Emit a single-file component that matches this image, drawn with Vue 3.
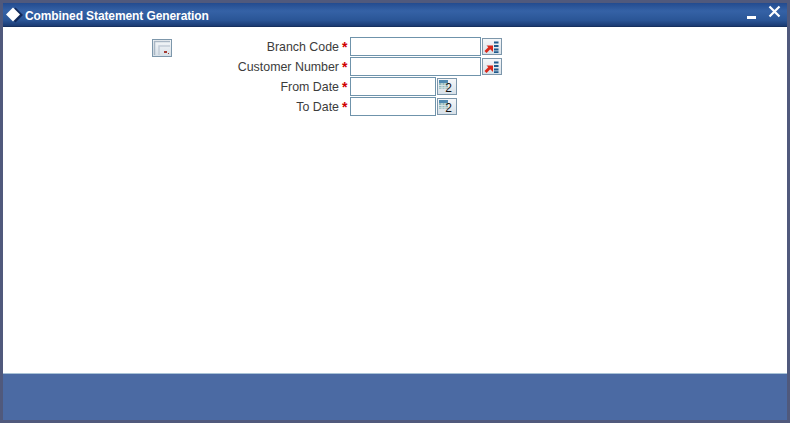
<template>
  <div class="window">
    <header class="titlebar">
      <svg class="logo" width="18" height="18" viewBox="0 0 18 18">
        <path d="M9.5 1.5 L17 9 L9.5 16.5 L2 9 Z" fill="#12295a" />
        <path d="M7 1.5 L14 8.5 L7 15.5 L0 8.5 Z" fill="#fff" />
      </svg>
      <span class="title">Combined Statement Generation</span>
      <div class="controls">
        <span class="min"></span>
        <svg width="13" height="13" viewBox="0 0 13 13">
          <path d="M1.5 1.5 L11.5 11.5 M11.5 1.5 L1.5 11.5" stroke="#fff" stroke-width="2.2" />
        </svg>
      </div>
    </header>

    <main class="body">
      <button class="icon-btn side-btn" type="button">
        <svg width="18" height="16" viewBox="0 0 18 16">
          <path d="M1.5 15 V1.5 H17" fill="none" stroke="#a9b6c4" stroke-width="1.5" />
          <path d="M6 15 V6 H17" fill="none" stroke="#c3cdd8" stroke-width="1.5" />
          <rect x="11" y="11" width="3" height="2" fill="#a33a32" />
          <rect x="15" y="13" width="1" height="1" fill="#a33a32" />
        </svg>
      </button>

      <div class="form">
        <div v-for="f in fields" :key="f.label" class="row">
          <label class="label">{{ f.label }}</label>
          <span class="star">*</span>
          <input class="input" :class="f.type" type="text" />
          <button class="icon-btn field-btn" type="button">
            <svg v-if="f.type === 'lov'" width="18" height="15" viewBox="0 0 18 15">
              <path d="M2.5 13 L7 8.5" stroke="#d8281c" stroke-width="2.8" />
              <path d="M3.5 6.5 H10 V13 Z" fill="#d8281c" />
              <path d="M11 3.5 H15.5 M11 7 H15.5 M11 10.5 H15.5 M11 13.2 H15.5" stroke="#1f5a8c" stroke-width="1.8" />
            </svg>
            <span v-else class="cal">
              <svg width="18" height="15" viewBox="0 0 18 15">
                <rect x="1" y="1" width="9" height="9" fill="#8fb8bc" />
                <rect x="1" y="1" width="9" height="3" fill="#4f8ab0" />
                <path d="M1 6.5 H10 M1 8.8 H10 M4 4 V10 M7 4 V10" stroke="#d6e4e4" stroke-width="1" />
              </svg>
              <span class="cal-num">2</span>
            </span>
          </button>
        </div>
      </div>
    </main>

    <footer class="footer"></footer>
  </div>
</template>

<script setup>
const fields = [
  { label: 'Branch Code', type: 'lov' },
  { label: 'Customer Number', type: 'lov' },
  { label: 'From Date', type: 'date' },
  { label: 'To Date', type: 'date' }
]
</script>

<style>
html, body {
  margin: 0;
  background: #50597c;
}
</style>

<style scoped>
.window {
  box-sizing: border-box;
  width: 790px;
  height: 423px;
  padding: 3px;
  display: flex;
  flex-direction: column;
  background: #50597c;
  font-family: "Liberation Sans", Arial, sans-serif;
}

.titlebar {
  height: 24px;
  flex-shrink: 0;
  display: flex;
  align-items: center;
  padding: 0 6px 0 3px;
  box-sizing: border-box;
  background: linear-gradient(#234b8f 0%, #3562a6 35%, #2a5596 75%, #1b3a72 100%);
  border-bottom: 1px solid #16305f;
}

.logo {
  margin-right: 1px;
}

.title {
  color: #fff;
  font-size: 12px;
  font-weight: 700;
  letter-spacing: -0.1px;
  padding-top: 2px;
}

.controls {
  margin-left: auto;
  display: flex;
  align-items: flex-start;
  gap: 12px;
  height: 100%;
  padding-top: 2px;
  box-sizing: border-box;
}

.min {
  width: 9px;
  height: 3px;
  background: #fff;
  margin-top: 11px;
}

.body {
  height: 347px;
  flex-shrink: 0;
  box-sizing: border-box;
  background: #fff;
  border-bottom: 1px solid #a9c2d6;
  display: flex;
  align-items: flex-start;
  padding: 10px 0 0 149px;
}

.side-btn {
  margin-top: 2px;
}

.form {
  margin-left: 37px;
  display: flex;
  flex-direction: column;
}

.row {
  display: flex;
  align-items: center;
  height: 20px;
}

.label {
  width: 130px;
  text-align: right;
  font-size: 12.4px;
  color: #3c3c3c;
  white-space: nowrap;
}

.star {
  width: 11px;
  box-sizing: border-box;
  padding-left: 3px;
  color: #d00000;
  font-size: 14px;
  font-weight: 700;
  line-height: 14px;
}

.input {
  box-sizing: border-box;
  height: 19px;
  padding: 0 2px;
  margin: 0 1px 0 0;
  align-self: flex-start;
  border: 1px solid #6f93ab;
  background: #fff;
  outline: none;
}

.input.lov {
  width: 131px;
}

.input.date {
  width: 86px;
}

.icon-btn {
  box-sizing: border-box;
  width: 20px;
  height: 18px;
  padding: 0;
  border: 1px solid #7d97ab;
  background: linear-gradient(#f5f7f9, #d7e0e8);
  display: flex;
  align-items: center;
  justify-content: center;
}

.field-btn {
  height: 17px;
  align-self: flex-start;
  margin-top: 1px;
}

.cal {
  position: relative;
  display: block;
  width: 18px;
  height: 15px;
}

.cal-num {
  position: absolute;
  right: 4px;
  bottom: 0;
  font-size: 12px;
  line-height: 12px;
  color: #111;
}

.footer {
  flex: 1;
  background: #4b6aa3;
}
</style>
